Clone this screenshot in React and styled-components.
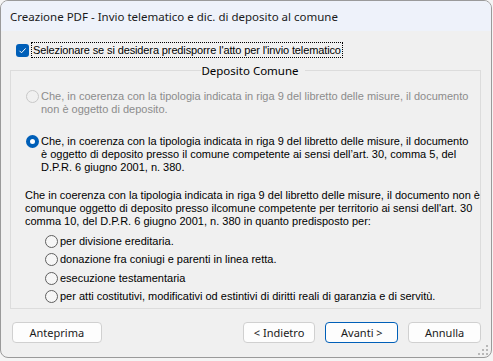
import React from 'react';
import styled, { createGlobalStyle } from 'styled-components';

const GlobalStyle = createGlobalStyle`
  html, body {
    margin: 0;
    padding: 0;
    background: #f4f4f4;
  }
  body {
    width: 493px;
    height: 361px;
    overflow: hidden;
    font-family: "Liberation Sans", Arial, sans-serif;
  }
`;

const Window = styled.div`
  box-sizing: border-box;
  width: 492px;
  height: 358px;
  border: 1px solid #9a9a9a;
  border-radius: 8px;
  background: #f0f0f0;
  overflow: hidden;
  display: flex;
  flex-direction: column;
  position: relative;
`;

const TitleBar = styled.div`
  height: 30px;
  flex: none;
  background: #eef2fa;
  display: flex;
  align-items: center;
  padding-left: 9px;
  font-family: "Noto Sans", sans-serif;
  font-size: 11.5px;
  color: #1a1a1a;
`;

const Body = styled.div`
  flex: 1;
  display: flex;
  flex-direction: column;
  padding: 0 10px 0 9px;
  font-size: 11px;
  color: #000;
`;

const CheckRow = styled.label`
  display: flex;
  align-items: center;
  margin: 11px 0 0 6px;
  height: 16px;
`;

const CheckBox = styled.span`
  width: 13px;
  height: 13px;
  border-radius: 3px;
  background: #005fb8;
  display: flex;
  align-items: center;
  justify-content: center;
  flex: none;
`;

const FocusText = styled.span`
  margin-left: 2px;
  padding: 1px;
  border: 1px dotted #000;
  line-height: 12px;
  letter-spacing: -0.12px;
  white-space: nowrap;
`;

const Group = styled.fieldset`
  margin: 6px 0 0 0;
  padding: 6px 0 0 15px;
  border: 1px solid #dcdcdc;
  border-radius: 0;
  height: 245px;
  box-sizing: border-box;
  display: flex;
  flex-direction: column;
  min-width: 0;
`;

const Legend = styled.legend`
  margin: 0 auto;
  padding: 0 3px;
  line-height: 13px;
  font-family: "Noto Sans", sans-serif;
  font-size: 11.5px;
  transform: translateX(-3px);
`;

const Option = styled.div`
  display: flex;
  align-items: flex-start;
  margin-top: ${p => p.$mt || 0}px;
  color: ${p => (p.$disabled ? '#8c8c8c' : '#000')};
  line-height: 13px;
  white-space: nowrap;
`;

const Radio = styled.span`
  box-sizing: border-box;
  width: 13px;
  height: 13px;
  border-radius: 50%;
  flex: none;
  margin: 0 2px 0 0;
  border: ${p =>
    p.$checked ? '4px solid #005fb8' : p.$disabled ? '1px solid #c8c8c8' : '1px solid #5f5f5f'};
  background: ${p => (p.$checked ? '#ffffff' : p.$disabled ? '#f0f0f0' : '#f6f6f6')};
`;

const Paragraph = styled.div`
  margin: 15px 0 0 -1px;
  line-height: 13px;
  white-space: nowrap;
`;

const SubList = styled.div`
  display: flex;
  flex-direction: column;
  margin: 4px 0 0 19px;
`;

const SubOption = styled(Option)`
  height: 18.5px;
  align-items: center;
`;

const Footer = styled.div`
  display: flex;
  align-items: center;
  margin: 13px 0 0 2px;
  gap: 10px;
`;

const Button = styled.button`
  box-sizing: border-box;
  width: ${p => p.$w}px;
  height: 21px;
  background: #fdfdfd;
  border: 1px solid ${p => (p.$default ? '#005fb8' : '#d0d0d0')};
  border-radius: 4px;
  font-family: "Noto Sans", sans-serif;
  font-size: 11px;
  color: #1a1a1a;
  padding: 0;
  margin-left: ${p => p.$ml || 0}px;
`;

const Grip = styled.svg`
  position: absolute;
  right: 3px;
  bottom: 2px;
`;

export default function App() {
  return (
    <>
      <GlobalStyle />
      <Window>
        <TitleBar>Creazione PDF - Invio telematico e dic. di deposito al comune</TitleBar>
        <Body>
          <CheckRow>
            <CheckBox>
              <svg width="9" height="9" viewBox="0 0 9 9">
                <path d="M1.5 4.8 L3.5 6.8 L7.6 2.4" fill="none" stroke="#fff" strokeWidth="1" />
              </svg>
            </CheckBox>
            <FocusText>Selezionare se si desidera predisporre l'atto per l'invio telematico</FocusText>
          </CheckRow>
          <Group>
            <Legend>Deposito Comune</Legend>
            <Option $disabled $mt={7}>
              <Radio $disabled />
              <span>
                Che, in coerenza con la tipologia indicata in riga 9 del libretto delle misure, il documento
                <br />
                non è oggetto di deposito.
              </span>
            </Option>
            <Option $mt={19}>
              <Radio $checked />
              <span>
                Che, in coerenza con la tipologia indicata in riga 9 del libretto delle misure, il documento
                <br />
                è oggetto di deposito presso il comune competente ai sensi dell’art. 30, comma 5, del
                <br />
                D.P.R. 6 giugno 2001, n. 380.
              </span>
            </Option>
            <Paragraph>
              Che in coerenza con la tipologia indicata in riga 9 del libretto delle misure, il documento non è
              <br />
              comunque oggetto di deposito presso ilcomune competente per territorio ai sensi dell'art. 30
              <br />
              comma 10, del D.P.R. 6 giugno 2001, n. 380 in quanto predisposto per:
            </Paragraph>
            <SubList>
              <SubOption>
                <Radio />
                <span>per divisione ereditaria.</span>
              </SubOption>
              <SubOption>
                <Radio />
                <span>donazione fra coniugi e parenti in linea retta.</span>
              </SubOption>
              <SubOption>
                <Radio />
                <span>esecuzione testamentaria</span>
              </SubOption>
              <SubOption>
                <Radio />
                <span>per atti costitutivi, modificativi od estintivi di diritti reali di garanzia e di servitù.</span>
              </SubOption>
            </SubList>
          </Group>
          <Footer>
            <Button $w={90}>Anteprima</Button>
            <Button $w={73} $ml={131}>&lt; Indietro</Button>
            <Button $w={73} $default>Avanti &gt;</Button>
            <Button $w={73}>Annulla</Button>
          </Footer>
        </Body>
        <Grip width="10" height="10" viewBox="0 0 10 10">
          <g fill="#b8b8b8">
            <rect x="8" y="0" width="2" height="2" />
            <rect x="4" y="4" width="2" height="2" />
            <rect x="8" y="4" width="2" height="2" />
            <rect x="0" y="8" width="2" height="2" />
            <rect x="4" y="8" width="2" height="2" />
            <rect x="8" y="8" width="2" height="2" />
          </g>
        </Grip>
      </Window>
    </>
  );
}
